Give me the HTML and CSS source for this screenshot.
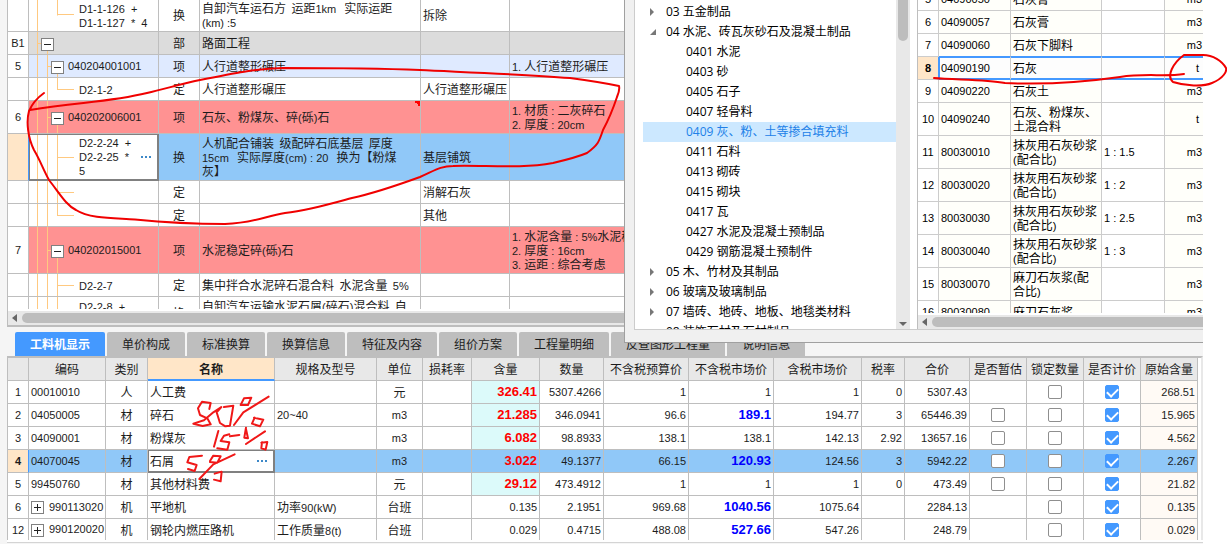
FILE: index.html
```html
<!DOCTYPE html>
<html lang="zh-CN">
<head>
<meta charset="utf-8">
<title>工料机显示</title>
<link rel="stylesheet" href="styles.css">
</head>
<body>
<main class="app">
  <section class="upper">
    <div class="viewport">
      <table class="grid bill">
        <colgroup><col class="c-no"><col class="c-tree"><col class="c-kind"><col class="c-title"><col class="c-part"><col></colgroup>
        <tbody>
        <tr class="two first"><td class="no"></td><td class="leaf last g1"><span class="n">D1-1-126 &nbsp;+<br>D1-1-127 &nbsp;* &nbsp;4</span></td><td class="mid">换</td><td>自卸汽车运石方&nbsp; 运距<span class="n">1km</span> &nbsp; 实际运距<br><span class="n">(km) :5</span></td><td>拆除</td><td></td></tr>
        <tr class="part"><td class="no n">B1</td><td class="branch top"><button class="box" aria-label="折叠"></button></td><td class="mid">部</td><td>路面工程</td><td></td><td></td></tr>
        <tr class="pale"><td class="no n">5</td><td class="branch"><button class="box" aria-label="折叠"></button><span class="n">040204001001</span></td><td class="mid">项</td><td>人行道整形碾压</td><td></td><td><span class="n">1. </span>人行道整形碾压</td></tr>
        <tr><td class="no"></td><td class="leaf last"><span class="n">D2-1-2</span></td><td class="mid">定</td><td>人行道整形碾压</td><td>人行道整形碾压</td><td></td></tr>
        <tr class="red two"><td class="no n">6</td><td class="branch"><button class="box" aria-label="折叠"></button><span class="n">040202006001</span></td><td class="mid">项</td><td class="noted">石灰、粉煤灰、碎<span class="n">(</span>砾<span class="n">)</span>石</td><td></td><td><span class="n">1. </span>材质<span class="n"> : </span>二灰碎石<br><span class="n">2. </span>厚度<span class="n"> : 20cm</span></td></tr>
        <tr class="blue three"><td class="no cur"></td><td class="leaf editing"><div class="edit"><span class="n">D2-2-24 &nbsp;+<br>D2-2-25 &nbsp;*<br>5</span><button class="more" aria-label="更多"><i></i><i></i><i></i></button></div></td><td class="mid">换</td><td>人机配合铺装&nbsp; 级配碎石底基层&nbsp; 厚度<br><span class="n">15cm</span> &nbsp; 实际厚度<span class="n">(cm) : 20</span> &nbsp; 换为【粉煤<br>灰】</td><td>基层铺筑</td><td></td></tr>
        <tr><td class="no"></td><td class="leaf"></td><td class="mid">定</td><td></td><td>消解石灰</td><td></td></tr>
        <tr><td class="no"></td><td class="leaf last"></td><td class="mid">定</td><td></td><td>其他</td><td></td></tr>
        <tr class="red three"><td class="no n">7</td><td class="branch"><button class="box" aria-label="折叠"></button><span class="n">040202015001</span></td><td class="mid">项</td><td>水泥稳定碎<span class="n">(</span>砾<span class="n">)</span>石</td><td></td><td><span class="n">1. </span>水泥含量<span class="n"> : 5%</span>水泥稳定碎石<br><span class="n">2. </span>厚度<span class="n"> : 16cm</span><br><span class="n">3. </span>运距<span class="n"> : </span>综合考虑</td></tr>
        <tr><td class="no"></td><td class="leaf"><span class="n">D2-2-7</span></td><td class="mid">定</td><td>集中拌合水泥碎石混合料&nbsp; 水泥含量&nbsp; <span class="n">5%</span></td><td></td><td></td></tr>
        <tr class="two"><td class="no"></td><td class="leaf"><span class="n">D2-2-8 &nbsp;+<br>D2-2-9</span></td><td class="mid">换</td><td>自卸汽车运输水泥石屑<span class="n">(</span>碎石<span class="n">)</span>混合料&nbsp; 自<br>卸汽车</td><td></td><td></td></tr>
        </tbody>
      </table>
    </div>
    <div class="hbar"><span class="arrow-left"></span><span class="thumb"></span></div>
  </section>

  <section class="lower">
    <nav class="tabs">
      <button class="tab on">工料机显示</button><button class="tab">单价构成</button><button class="tab">标准换算</button><button class="tab">换算信息</button><button class="tab">特征及内容</button><button class="tab">组价方案</button><button class="tab">工程量明细</button><button class="tab">反查图形工程量</button><button class="tab">说明信息</button>
    </nav>
    <div class="tablebox">
    <table class="grid res">
      <colgroup><col class="w20"><col class="w77"><col class="w42"><col class="w127"><col class="w102"><col class="w46"><col class="w49"><col class="w68"><col class="w64"><col class="w85"><col class="w85"><col class="w88"><col class="w43"><col class="w65"><col class="w57"><col class="w57"><col class="w57"><col class="w57"></colgroup>
      <thead><tr><th></th><th>编码</th><th>类别</th><th class="sel">名称</th><th>规格及型号</th><th>单位</th><th>损耗率</th><th>含量</th><th>数量</th><th>不含税预算价</th><th>不含税市场价</th><th>含税市场价</th><th>税率</th><th>合价</th><th>是否暂估</th><th>锁定数量</th><th>是否计价</th><th>原始含量</th></tr></thead>
      <tbody>
      <tr><td class="no n">1</td><td class="n">00010010</td><td class="mid">人</td><td>人工费</td><td></td><td class="mid">元</td><td></td><td class="num qty">326.41</td><td class="num">5307.4266</td><td class="num">1</td><td class="num">1</td><td class="num">1</td><td class="num">0</td><td class="num">5307.43</td><td></td><td class="mid"><input type="checkbox" aria-label="锁定数量"></td><td class="mid"><input type="checkbox" aria-label="是否计价" checked></td><td class="num orig">268.51</td></tr>
      <tr><td class="no n">2</td><td class="n">04050005</td><td class="mid">材</td><td>碎石</td><td class="n">20~40</td><td class="mid n">m3</td><td></td><td class="num qty">21.285</td><td class="num">346.0941</td><td class="num">96.6</td><td class="num adj">189.1</td><td class="num">194.77</td><td class="num">3</td><td class="num">65446.39</td><td class="mid"><input type="checkbox" aria-label="是否暂估"></td><td class="mid"><input type="checkbox" aria-label="锁定数量"></td><td class="mid"><input type="checkbox" aria-label="是否计价" checked></td><td class="num orig">15.965</td></tr>
      <tr><td class="no n">3</td><td class="n">04090001</td><td class="mid">材</td><td>粉煤灰</td><td></td><td class="mid n">m3</td><td></td><td class="num qty">6.082</td><td class="num">98.8933</td><td class="num">138.1</td><td class="num">138.1</td><td class="num">142.13</td><td class="num">2.92</td><td class="num">13657.16</td><td class="mid"><input type="checkbox" aria-label="是否暂估"></td><td class="mid"><input type="checkbox" aria-label="锁定数量"></td><td class="mid"><input type="checkbox" aria-label="是否计价" checked></td><td class="num orig">4.562</td></tr>
      <tr class="blue"><td class="no n cur">4</td><td class="n">04070045</td><td class="mid">材</td><td class="editing"><div class="edit">石屑<button class="more" aria-label="更多"><i></i><i></i><i></i></button></div></td><td></td><td class="mid n">m3</td><td></td><td class="num qty">3.022</td><td class="num">49.1377</td><td class="num">66.15</td><td class="num adj">120.93</td><td class="num">124.56</td><td class="num">3</td><td class="num">5942.22</td><td class="mid"><input type="checkbox" aria-label="是否暂估"></td><td class="mid"><input type="checkbox" aria-label="锁定数量"></td><td class="mid"><input type="checkbox" aria-label="是否计价" checked></td><td class="num orig">2.267</td></tr>
      <tr><td class="no n">5</td><td class="n">99450760</td><td class="mid">材</td><td>其他材料费</td><td></td><td class="mid">元</td><td></td><td class="num qty">29.12</td><td class="num">473.4912</td><td class="num">1</td><td class="num">1</td><td class="num">1</td><td class="num">0</td><td class="num">473.49</td><td class="mid"><input type="checkbox" aria-label="是否暂估"></td><td class="mid"><input type="checkbox" aria-label="锁定数量"></td><td class="mid"><input type="checkbox" aria-label="是否计价" checked></td><td class="num orig">21.82</td></tr>
      <tr><td class="no n">6</td><td class="n"><button class="box plus" aria-label="展开"></button>990113020</td><td class="mid">机</td><td>平地机</td><td>功率<span class="n">90(kW)</span></td><td class="mid">台班</td><td></td><td class="num">0.135</td><td class="num">2.1951</td><td class="num">969.68</td><td class="num adj">1040.56</td><td class="num">1075.64</td><td></td><td class="num">2284.13</td><td></td><td class="mid"><input type="checkbox" aria-label="锁定数量"></td><td class="mid"><input type="checkbox" aria-label="是否计价" checked></td><td class="num orig">0.135</td></tr>
      <tr class="end"><td class="no n">12</td><td class="n"><button class="box plus" aria-label="展开"></button>990120020</td><td class="mid">机</td><td>钢轮内燃压路机</td><td>工作质量<span class="n">8(t)</span></td><td class="mid">台班</td><td></td><td class="num">0.029</td><td class="num">0.4715</td><td class="num">488.08</td><td class="num adj">527.66</td><td class="num">547.26</td><td></td><td class="num">248.79</td><td></td><td class="mid"><input type="checkbox" aria-label="锁定数量"></td><td class="mid"><input type="checkbox" aria-label="是否计价" checked></td><td class="num orig">0.029</td></tr>
      </tbody>
    </table>
    </div>
    <div class="foot"></div>
  </section>

  <section class="dialog" role="dialog" aria-label="材料查询">
    <div class="panes">
      <div class="treepane">
        <ul class="tree">
          <li><i class="tri"></i>03 五金制品</li>
          <li><i class="tri open"></i>04 水泥、砖瓦灰砂石及混凝土制品</li>
          <li class="sub">0401 水泥</li>
          <li class="sub">0403 砂</li>
          <li class="sub">0405 石子</li>
          <li class="sub">0407 轻骨料</li>
          <li class="sub chosen">0409 灰、粉、土等掺合填充料</li>
          <li class="sub">0411 石料</li>
          <li class="sub">0413 砌砖</li>
          <li class="sub">0415 砌块</li>
          <li class="sub">0417 瓦</li>
          <li class="sub">0427 水泥及混凝土预制品</li>
          <li class="sub">0429 钢筋混凝土预制件</li>
          <li><i class="tri"></i>05 木、竹材及其制品</li>
          <li><i class="tri"></i>06 玻璃及玻璃制品</li>
          <li><i class="tri"></i>07 墙砖、地砖、地板、地毯类材料</li>
          <li><i class="tri none"></i>08 装饰石材及石材制品</li>
        </ul>
        <div class="vbar"><span class="vthumb"></span><span class="arrow-down"></span></div>
      </div>
      <div class="matpane">
        <div class="viewport">
        <table class="grid mat">
          <colgroup><col class="c-no"><col class="m-code"><col class="m-name"><col class="m-spec"><col class="m-unit"></colgroup>
          <tbody>
          <tr><td class="no n">5</td><td class="n">04090050</td><td>石灰膏</td><td></td><td class="unit n">m3</td></tr>
          <tr><td class="no n">6</td><td class="n">04090057</td><td>石灰膏</td><td></td><td class="unit n">m3</td></tr>
          <tr class="before"><td class="no n">7</td><td class="n">04090060</td><td>石灰下脚料</td><td></td><td class="unit n">m3</td></tr>
          <tr class="picked"><td class="no n cur">8</td><td class="n">04090190</td><td>石灰</td><td></td><td class="unit n">t</td></tr>
          <tr><td class="no n">9</td><td class="n">04090220</td><td>石灰土</td><td></td><td class="unit n">m3</td></tr>
          <tr class="two"><td class="no n">10</td><td class="n">04090240</td><td>石灰、粉煤灰、<br>土混合料</td><td></td><td class="unit ton n">t</td></tr>
          <tr class="two"><td class="no n">11</td><td class="n">80030010</td><td>抹灰用石灰砂浆<br><span class="n">(</span>配合比<span class="n">)</span></td><td class="n">1 : 1.5</td><td class="unit n">m3</td></tr>
          <tr class="two"><td class="no n">12</td><td class="n">80030020</td><td>抹灰用石灰砂浆<br><span class="n">(</span>配合比<span class="n">)</span></td><td class="n">1 : 2</td><td class="unit n">m3</td></tr>
          <tr class="two"><td class="no n">13</td><td class="n">80030030</td><td>抹灰用石灰砂浆<br><span class="n">(</span>配合比<span class="n">)</span></td><td class="n">1 : 2.5</td><td class="unit n">m3</td></tr>
          <tr class="two"><td class="no n">14</td><td class="n">80030040</td><td>抹灰用石灰砂浆<br><span class="n">(</span>配合比<span class="n">)</span></td><td class="n">1 : 3</td><td class="unit n">m3</td></tr>
          <tr class="two"><td class="no n">15</td><td class="n">80030070</td><td>麻刀石灰浆<span class="n">(</span>配<br>合比<span class="n">)</span></td><td></td><td class="unit n">m3</td></tr>
          <tr><td class="no n">16</td><td class="n">80030080</td><td>麻刀石灰浆</td><td></td><td class="unit n">m3</td></tr>
          </tbody>
        </table>
        </div>
        <div class="hbar"><span class="arrow-left"></span><span class="thumb"></span></div>
      </div>
    </div>
  </section>
</main>

<svg class="ink" width="1227" height="544" viewBox="0 0 1227 544" aria-hidden="true">
  <path d="M44 93C37 98 32 104 29 111C26 122 28 138 34 150C40 160 43 169 49 180C60 194 66 205 76 210C90 219 115 218 135 219.500C170 223 200 224 225 224C255 223 265 216 285 213C310 210 330 204 352 198C375 193 398 185 420 177C434 171 440 166 453 166C485 165 520 169 553 163C570 159 580 156 587 153C598 145 599 142 603 130C609 119 616 100 617 97Q620 90 619 86C600 82 585 80 570 78C520 74 460 72 420 70C370 68 340 68 283 68C255 69 235 73 200 80C180 84 165 89 147 93C110 102 80 102 30 110"/>
  <path d="M934 78C955 80 985 79 1005 83C1050 85 1085 82 1120 77C1145 73 1165 77 1184 74"/>
  <path d="M1194 55L1184 55C1173 63 1166 76 1173 82C1185 86 1203 87 1212 83C1224 78 1227 71 1226 68C1222 61 1213 55 1203 55L1184 55"/>
  <g class="hand" transform="translate(0 325) scale(.3333)">
    <path d="M628 252L632 234L606 230L594 250L600 270L622 280L632 298L608 303L580 296L612 286L640 262L664 246L650 262L660 294L676 304L690 302L700 242L672 246M722 240L732 220L754 218L744 240L722 240M806 215L730 262L702 300M762 278L790 284L780 304L756 296L764 278"/>
    <path d="M655 318L642 365M688 328L672 332L662 348L688 352L682 374L652 370M690 334L718 330M738 308L733 338L744 340L738 312M795 319L738 357M784 353L802 351L797 374L784 370L786 352"/>
    <path d="M606 392L568 396L562 412L590 420L584 438L564 432M630 408L640 392L662 394L652 413L630 411M704 388L640 418L598 462M644 446L665 440L662 469L642 464"/>
  </g>
</svg>
</body>
</html>
```

FILE: styles.css
```css
* { box-sizing: border-box; }
body { margin: 0; background: #fff; color: #1c1c1c; font: 12px/14px "Noto Sans CJK SC", sans-serif; }
button { margin: 0; padding: 0; border: 0; background: none; color: inherit; font: inherit; }
.app { position: relative; display: flex; flex-direction: column; height: 100vh; margin-right: 24px; padding-left: 7px; background: #f5f5f5; }

.upper { flex: 1; min-height: 0; display: flex; flex-direction: column; background: #fff; border-left: 1px solid #bebebe; }
.viewport { flex: 1; min-height: 0; overflow: hidden; }
.grid { width: 100%; table-layout: fixed; border-collapse: separate; border-spacing: 0; background: #fff; }
.grid td, .grid th { height: 23px; padding: 0 2px; border: 0 solid #bebebe; border-width: 0 1px 1px 0; white-space: nowrap; overflow: hidden; font-weight: 400; text-align: left; vertical-align: middle; }
.grid .two td { height: 33px; }
.grid .first td { height: 32px; padding-bottom: 2px; }
.grid .three td { height: 47px; }
.n, .grid .num { font-family: "Liberation Sans", "Noto Sans CJK SC", sans-serif; font-size: 11px; }
span.n { line-height: 10px; }
.grid .mid { text-align: center; }
.grid .no { padding: 0; background: #fff; text-align: center; }
.grid .cur { background: #ffe6c8; border-right-color: #4499ff; font-weight: 700; }

.c-no { width: 21px; }
.c-tree { width: 130px; }
.c-kind { width: 41px; }
.c-title { width: 221px; }
.c-part { width: 89px; }
.part td { background-color: #dcdcdc; }
.pale td { background-color: #dfeaff; }
.red td { background-color: #ff9292; }
.blue td { background-color: #90c8f8; }
.noted { background-image: linear-gradient(45deg, transparent 50%, #f00 50%); background-repeat: no-repeat; background-position: 100% 0; background-size: 6px 6px; }

.branch, .leaf { --l: linear-gradient(#ffc980, #ffc980); background-image: var(--l), var(--l), var(--l), var(--l); background-repeat: no-repeat; }
.grid .branch { padding-left: 22px; background-position: 8px 0, 18px 0, 28px 100%, 18px 50%; background-size: 1px 100%, 1px 100%, 1px 50%, 5px 1px; }
.grid .top { padding-left: 12px; background-position: 8px 0, 8px 0, 18px 100%, 8px 50%; }
.grid .leaf { padding-left: 50px; background-position: 8px 0, 18px 0, 28px 0, 28px 50%; background-size: 1px 100%, 1px 100%, 1px 100%, 17px 1px; }
.grid .last { background-size: 1px 100%, 1px 100%, 1px 50%, 17px 1px; }
.grid .g1 { background-position: 8px 0, 8px 0, 28px 0, 28px 45%; }
.box { width: 13px; height: 13px; margin-right: 4px; border: 1px solid #808080; background: linear-gradient(#222, #222) 50% 50% / 7px 1px no-repeat #fff; vertical-align: middle; }
.plus { background: linear-gradient(#222, #222) 50% 50% / 7px 1px no-repeat, linear-gradient(#222, #222) 50% 50% / 1px 7px no-repeat #fff; margin-right: 5px; }
.grid .editing { background-color: #fff; box-shadow: inset 0 0 0 1px #808080; border-color: #808080; }
.edit { display: flex; align-items: center; justify-content: space-between; padding-right: 4px; }
.edit .n { line-height: 14px; }
.more { display: flex; gap: 2px; padding: 4px 1px; }
.more i { width: 2px; height: 2px; background: #3c88c8; }

.hbar { display: flex; align-items: center; gap: 5px; height: 16px; padding-left: 4px; border-top: 2px solid #fff; background: #e8e8e8; }
.arrow-left { border: 4px solid transparent; border-right: 5px solid #666; border-left: 0; }
.thumb { flex: 1; height: 10px; border-radius: 5px 0 0 5px; background: #bdbdbd; }

.lower { border-top: 2px solid #bdbdbd; }
.tabs { display: flex; gap: 2px; padding: 5px 8px 0; }
.tab { height: 24px; padding: 0 15px; border-radius: 2px 2px 0 0; background: #bebebe; }
.on { background: #4499ff; color: #fff; font-weight: 700; }
.tablebox { padding-right: 4px; border: solid #bebebe; border-width: 2px 0 0 1px; border-right: 2px solid #e8e8e8; background: #fff; }
.grid th { background: #e8e8e8; text-align: center; }
.grid .sel { background: #ffe6c8; border-bottom: 2px solid #4499ff; font-weight: 700; }
.w20 { width: 21px; } .w77 { width: 77px; } .w42 { width: 42px; } .w127 { width: 127px; } .w102 { width: 102px; }
.w46 { width: 46px; } .w49 { width: 49px; } .w68 { width: 68px; } .w64 { width: 64px; } .w85 { width: 85px; }
.w88 { width: 88px; } .w43 { width: 43px; } .w65 { width: 65px; } .w57 { width: 57px; }
.grid .num { text-align: right; }
.grid .qty { background: #dcfafa; color: #f00; font-size: 13px; font-weight: 700; }
.grid .adj { color: #00f; font-size: 13px; font-weight: 700; }
.grid .orig { background: #fffaf5; }
.grid .blue .qty, .grid .blue .orig { background: #90c8f8; }
.grid .end td { height: 21px; border-bottom: 0; }
.foot { height: 4px; border-top: 2px solid #fff; background: linear-gradient(#d4d4d4 50%, #f5f5f5 50%); }
input[type="checkbox"] { appearance: none; display: block; width: 14px; height: 14px; margin: 0 auto; border: 1px solid #8f8f8f; border-radius: 2px; background: #fff; }
input[type="checkbox"]:checked { border-color: #4499ff; background: #4499ff; }
input[type="checkbox"]:checked::after { content: ""; display: block; width: 9px; height: 5px; margin: 2px 0 0 1px; border: solid #fff; border-width: 0 0 2px 2px; transform: rotate(-45deg); }

.dialog { position: absolute; top: 0; left: 624px; right: 0; height: 343px; padding: 0 0 12px 9px; border: solid #a0a0a0; border-width: 0 0 1px 1px; background: #f0f0f0; }
.panes { display: flex; height: 100%; border: solid #ccc; border-width: 0 0 1px 1px; background: #fff; }
.treepane { display: flex; flex: 0 0 275px; overflow: hidden; }
.tree { flex: 1; margin: 0; padding: 2px 0 0 8px; list-style: none; color: #000; font-family: "Open Sans", "Noto Sans CJK SC", sans-serif; }
.tree li { display: flex; align-items: center; height: 20px; white-space: pre; }
.tree .sub { padding-left: 43px; }
.tree .chosen { background: #cce8ff; color: #2080e8; }
.tri { width: 16px; margin-left: 7px; }
.tri::before { content: ""; display: block; width: 0; border: 4px solid transparent; border-left: 4px solid #777; border-right: 0; }
.open::before { border: 0; border-left: 6px solid transparent; border-bottom: 6px solid #777; }
.none::before { display: none; }
.vbar { display: flex; flex-direction: column; justify-content: space-between; align-items: center; width: 14px; padding-bottom: 3px; background: #e8e8e8; }
.vthumb { width: 10px; height: 41px; border-radius: 0 0 5px 5px; background: #bdbdbd; }
.arrow-down { border: 4px solid transparent; border-top: 4px solid #666; border-bottom: 0; }
.matpane { flex: 1; min-width: 0; display: flex; flex-direction: column; margin-left: 7px; border-left: 1px solid #bebebe; color: #000; }
.mat { margin-top: -12px; }
.mat td { border-color: #ccc; background: #fffffa; }
.mat td:nth-child(4) { background: #fff; }
.m-code { width: 72px; }
.m-name { width: 91px; }
.m-spec { width: 63px; }
.grid .unit { padding: 0 1px 0 0; border-right: 0; text-align: right; }
.grid .ton { padding-right: 4px; }
.mat .before td { border-bottom-color: #4499ff; }
.mat .before .no { border-bottom-color: #ccc; }
.mat .picked td { border-bottom-color: #4499ff; box-shadow: inset 0 1px #4499ff, inset 0 -1px #4499ff; background: #fdfdfd; }
.mat .picked td:nth-child(2) { box-shadow: inset 1px 0 #4499ff, inset 0 1px #4499ff, inset 0 -1px #4499ff; }
.mat .picked .cur { background: #ffe6c8; border-right-color: #4499ff; border-bottom-color: #ccc; box-shadow: none; }
.mat .picked .unit { padding-right: 4px; }

.ink { position: absolute; top: 0; left: 0; pointer-events: none; fill: none; stroke: #f00000; stroke-width: 2; stroke-linejoin: round; stroke-linecap: round; }
.hand { stroke: #f01818; stroke-width: 6; }
```
